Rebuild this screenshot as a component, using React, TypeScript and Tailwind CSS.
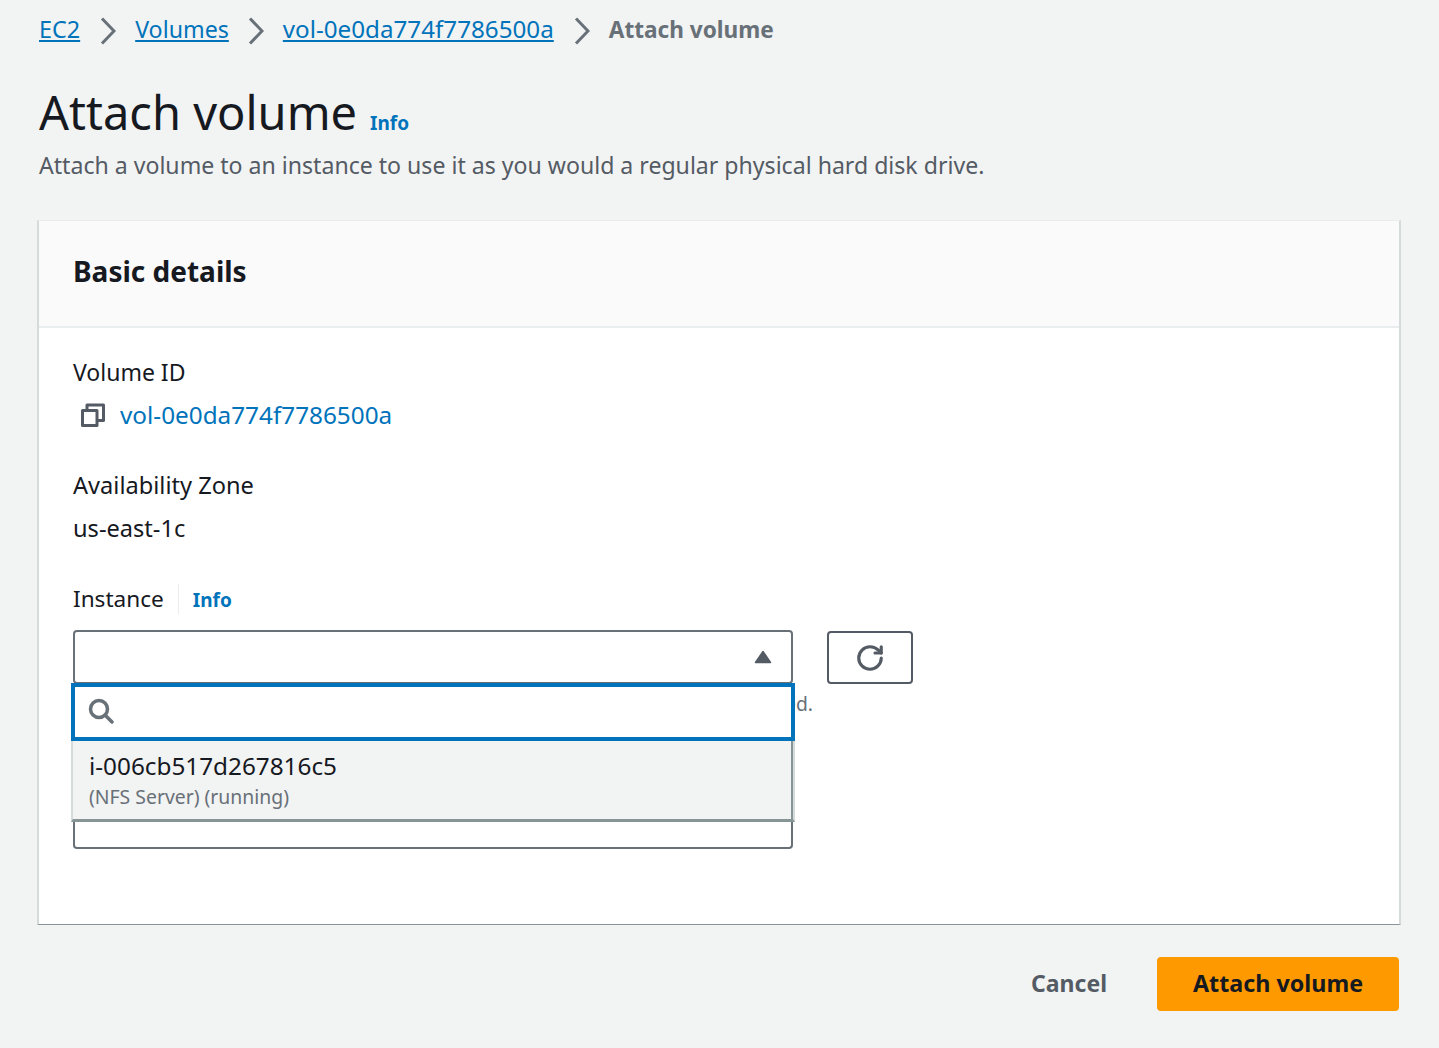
import { RotateCw } from "lucide-react";

const font = "font-['Noto_Sans','Open_Sans',sans-serif]";

function Chevron() {
  return (
    <svg width="16" height="28" viewBox="0 0 16 28" fill="none" className="mt-0.5 mr-[19px] ml-[20px] shrink-0">
      <path d="M2 1.5 L14 14 L2 26.5" stroke="#687078" strokeWidth="3" />
    </svg>
  );
}

function CopyIcon() {
  return (
    <svg width="26" height="26" viewBox="0 0 26 26" fill="none" stroke="#545b64" strokeWidth="3" strokeLinejoin="round">
      <path d="M2.5 8.5h14.5v15H2.5z" />
      <path d="M7 8V3h16.5v15.5H17.5" strokeWidth="3" />
    </svg>
  );
}

function SearchIcon() {
  return (
    <svg width="26" height="26" viewBox="0 0 26 26" fill="none" stroke="#687078" strokeWidth="3.5" strokeLinecap="round">
      <circle cx="11" cy="11" r="8.5" />
      <path d="M17 17l7 7" />
    </svg>
  );
}

export default function App() {
  return (
    <div className={`${font} min-h-[1048px] bg-[#f2f3f3] pr-[38px] pl-[38px] text-[#16191f]`}>
      <nav className="flex h-[60px] items-center pl-px leading-[30px]">
        <a className="mb-[2px] text-[23.4px] text-[#0073bb] underline underline-offset-2">EC2</a>
        <Chevron />
        <a className="mb-[2px] -mr-px text-[23.2px] text-[#0073bb] underline underline-offset-2">Volumes</a>
        <Chevron />
        <a className="mb-[2px] text-[24.2px] text-[#0073bb] underline underline-offset-2">vol-0e0da774f7786500a</a>
        <Chevron />
        <span className="text-[22.6px] font-bold text-[#687078]">Attach volume</span>
      </nav>

      <div className="mt-[21px] flex items-baseline pl-px">
        <h1 className="text-[47px] leading-[62px] font-normal">Attach volume</h1>
        <a className="ml-[13px] text-[19px] font-bold text-[#0073bb]">Info</a>
      </div>
      <p className="mt-[6px] pl-px text-[23.1px] leading-[32px] text-[#545b64]">
        Attach a volume to an instance to use it as you would a regular physical hard disk drive.
      </p>

      <section className="mt-[39px] -ml-px h-[705px] border-x-2 border-t border-b border-x-[#d5dbdb] border-t-[#eaeded] border-b-[#879596] bg-white">
        <header className="flex h-[107px] items-center border-b-2 border-[#eaeded] bg-[#fafafa] px-[34px] pb-[6px]">
          <h2 className="text-[28px] font-bold">Basic details</h2>
        </header>

        <div className="px-[34px]">
          <div className="pt-[28px] text-[23px] leading-[32px]">Volume ID</div>
          <div className="mt-[11px] flex items-center pl-[7px]">
            <CopyIcon />
            <a className="ml-[14px] text-[24.3px] leading-[32px] text-[#0073bb]">vol-0e0da774f7786500a</a>
          </div>

          <div className="mt-[38px] text-[23.6px] leading-[32px]">Availability Zone</div>
          <div className="mt-[11px] text-[23.6px] leading-[32px]">us-east-1c</div>

          <div className="mt-[39px] flex items-center leading-[32px]">
            <span className="text-[22.6px]">Instance</span>
            <span className="mx-[14px] h-[30px] w-px bg-[#eaeded]" />
            <a className="translate-y-px text-[19px] font-bold text-[#0073bb]">Info</a>
          </div>

          <div className="relative mt-[15px] w-[840px]">
            <div className="flex items-start gap-[34px]">
              <div className="flex h-[54px] w-[720px] items-center justify-end rounded border-2 border-[#687078] bg-white pr-[19px]">
                <svg width="18" height="14" viewBox="0 0 18 14" fill="#545b64" stroke="#545b64" strokeWidth="1.5" strokeLinejoin="round">
                  <path d="M9 1.5 L16.5 12.5 H1.5 Z" />
                </svg>
              </div>
              <button className="mt-px flex h-[53px] w-[86px] items-center justify-center rounded border-2 border-[#545b64] bg-white">
                <RotateCw size={30} color="#545b64" strokeWidth={2.5} />
              </button>
            </div>

            <p className="mt-[6px] w-[740px] text-[19.33px] leading-[28px] whitespace-nowrap text-[#687078]">
              Only instances in the same Availability Zone as the selected volume are displayed.
            </p>

            <div className="mt-[93px] h-[38px] w-[720px] rounded-b border-2 border-t-0 border-[#687078] bg-white" />

            {/* open dropdown lies over the hint and the next field */}
            <div className="absolute top-[53px] -left-[2px] w-[724px]">
              <div className="flex h-[58px] items-center border-4 border-[#0073bb] bg-white pb-[2px] pl-[13px]">
                <SearchIcon />
              </div>
              <div className="h-[81px] border-x-2 border-b-[3px] border-x-[#d5dbdb] border-b-[#879596] bg-[#f2f3f3] pt-[9px] pl-[16px] shadow-[inset_-2px_0_0_#879596]">
                <div className="text-[24.3px] leading-[32px]">i-006cb517d267816c5</div>
                <div className="mt-[1px] text-[19.4px] leading-[28px] text-[#687078]">(NFS Server) (running)</div>
              </div>
            </div>
          </div>
        </div>
      </section>

      <div className="mt-[32px] mr-[2px] flex items-center justify-end">
        <button className="mr-[50px] mb-[2px] text-[23px] font-bold text-[#545b64]">Cancel</button>
        <button className="h-[54px] w-[242px] rounded bg-[#ff9900] pb-[2px] text-[23.3px] font-bold text-[#16191f]">
          Attach volume
        </button>
      </div>
    </div>
  );
}
